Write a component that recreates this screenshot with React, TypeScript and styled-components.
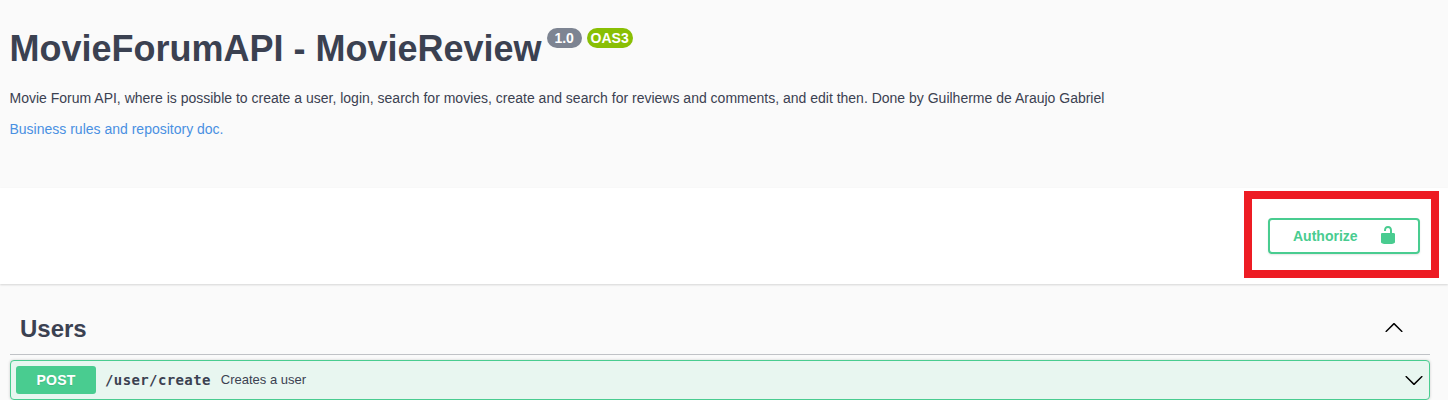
import React from "react";
import styled, { createGlobalStyle } from "styled-components";

const GlobalStyle = createGlobalStyle`
  *, *::before, *::after { box-sizing: border-box; }
  html { background: #fafafa; }
  body { margin: 0; height: 400px; overflow: hidden; font-family: "Liberation Sans", Arial, sans-serif; color: #3b4151; }
`;

const Page = styled.main`
  height: 400px;
  overflow: hidden;
  background: #fafafa;
`;

const Info = styled.header`
  height: 188px;
  padding: 28px 10px 0 9.5px;
`;

const Title = styled.h2`
  display: flex;
  align-items: flex-start;
  gap: 5px;
  margin: 0;
  height: 42px;
  font-size: 36px;
  line-height: 42px;
  font-weight: 700;
  white-space: nowrap;
`;

const Badge = styled.small<{ $color: string; $width: number }>`
  width: ${(p) => p.$width}px;
  height: 20px;
  border-radius: 57px;
  background: ${(p) => p.$color};
  color: #fff;
  font-size: 14px;
  line-height: 20px;
  font-weight: 700;
  text-align: center;
`;

const Description = styled.p`
  margin: 20px 0 0;
  font-size: 14px;
  line-height: 16px;
`;

const DocLink = styled.a`
  display: block;
  margin-top: 15px;
  font-size: 14px;
  line-height: 16px;
  color: #4990e2;
`;

const SchemeBar = styled.section`
  display: flex;
  justify-content: flex-end;
  height: 96px;
  padding: 3px 9px 0 0;
  background: #fff;
  box-shadow: 0 1px 2px rgba(0, 0, 0, 0.15);
`;

const Highlight = styled.div`
  width: 195px;
  height: 87px;
  padding: 19px 11px 0 16px;
  border: 8px solid #ed1c24;
`;

const AuthorizeButton = styled.button`
  display: flex;
  align-items: center;
  justify-content: space-between;
  width: 152px;
  height: 36px;
  padding: 0 20px 0 23px;
  border: 2px solid #49cc90;
  border-radius: 4px;
  background: transparent;
  box-shadow: 0 1px 2px rgba(0, 0, 0, 0.1);
  color: #49cc90;
  font: 700 14px "Liberation Sans", Arial, sans-serif;
`;

const TagHeader = styled.h3`
  display: flex;
  align-items: flex-start;
  justify-content: space-between;
  height: 53px;
  margin: 18px 18px 5px 10px;
  padding: 13px 26px 0 10px;
  border-bottom: 1px solid rgba(59, 65, 81, 0.3);
  font-size: 24px;
  line-height: 28px;
`;

const Operation = styled.div`
  display: flex;
  align-items: center;
  height: 40px;
  margin: 0 18px 0 10px;
  padding: 0 5px;
  border: 1px solid #49cc90;
  border-radius: 4px;
  background: #e8f6f0;
  box-shadow: 0 0 3px rgba(0, 0, 0, 0.19);
`;

const Method = styled.span`
  width: 80px;
  height: 28px;
  border-radius: 3px;
  background: #49cc90;
  color: #fff;
  text-align: center;
  text-shadow: 0 1px 0 rgba(0, 0, 0, 0.1);
  font-size: 14px;
  line-height: 28px;
  font-weight: 700;
  letter-spacing: 0.2px;
`;

const Path = styled.span`
  margin-left: 9px;
  font: 700 14px "DejaVu Sans Mono", monospace;
  letter-spacing: 0.39px;
`;

const Summary = styled.span`
  flex: 1;
  margin-left: 10px;
  padding-bottom: 1px;
  font-size: 13px;
`;

const Icon = styled.svg<{ $raise?: number }>`
  display: block;
  flex: none;
  width: 20px;
  height: 20px;
  margin-bottom: ${(p) => p.$raise ?? 0}px;
`;

const TagArrow = styled.span`
  padding-top: 2px;
`;

export default function App() {
  return (
    <>
      <GlobalStyle />
      <Page>
        <Info>
          <Title>
            MovieForumAPI - MovieReview
            <Badge $color="#7d8492" $width={35}>1.0</Badge>
            <Badge $color="#89bf04" $width={46}>OAS3</Badge>
          </Title>
          <Description>
            Movie Forum API, where is possible to create a user, login, search for movies, create and search for reviews and comments, and edit then. Done by Guilherme de Araujo Gabriel
          </Description>
          <DocLink>Business rules and repository doc.</DocLink>
        </Info>
        <SchemeBar>
          <Highlight>
            <AuthorizeButton>
              Authorize
              <Icon $raise={2} viewBox="0 0 20 20" fill="#49cc90">
                <path d="M15.8 8H14V5.6C14 2.703 12.665 1 10 1 7.334 1 6 2.703 6 5.6V6h2v-.801C8 3.754 8.797 3 10 3c1.203 0 2 .754 2 2.199V8H4c-.553 0-1 .646-1 1.199V17c0 .549.428 1.139.951 1.307l1.197.387C5.672 18.861 6.55 19 7.1 19h5.8c.549 0 1.428-.139 1.951-.307l1.196-.387c.524-.167.953-.757.953-1.306V9.199C17 8.646 16.352 8 15.8 8z" />
              </Icon>
            </AuthorizeButton>
          </Highlight>
        </SchemeBar>
        <TagHeader>
          Users
          <TagArrow>
            <Icon viewBox="0 0 20 20">
              <path d="M17.418 14.908c.272.268.709.268.979 0s.271-.701 0-.969l-7.908-7.83c-.27-.268-.707-.268-.979 0l-7.908 7.83c-.27.268-.27.701 0 .969.271.268.709.268.979 0L10 7.767l7.418 7.141z" />
            </Icon>
          </TagArrow>
        </TagHeader>
        <Operation>
          <Method>POST</Method>
          <Path>/user/create</Path>
          <Summary>Creates a user</Summary>
          <Icon viewBox="0 0 20 20">
            <path d="M17.418 6.109c.272-.268.709-.268.979 0s.271.701 0 .969l-7.908 7.83c-.27.268-.707.268-.979 0l-7.908-7.83c-.27-.268-.27-.701 0-.969.271-.268.709-.268.979 0L10 13.25l7.418-7.141z" />
          </Icon>
        </Operation>
      </Page>
    </>
  );
}
